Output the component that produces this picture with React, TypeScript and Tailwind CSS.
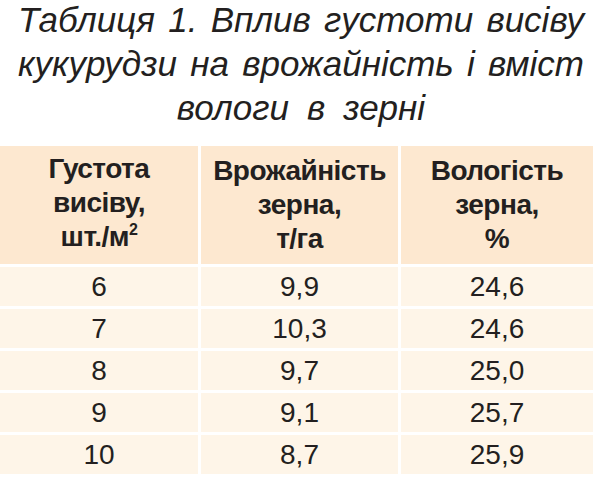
const rows = [
  ['6', '9,9', '24,6'],
  ['7', '10,3', '24,6'],
  ['8', '9,7', '25,0'],
  ['9', '9,1', '25,7'],
  ['10', '8,7', '25,9'],
]

const captionLines = [
  ['Таблиця', '1.', 'Вплив', 'густоти', 'висіву'],
  ['кукурудзи', 'на', 'врожайність', 'і', 'вміст'],
]

export default function App() {
  return (
    <div className="w-[600px] h-[479px] bg-white text-[#231f20] font-['Liberation_Sans',Arial,sans-serif] overflow-hidden">
      {/* caption */}
      <div className="h-[148px] pl-[18px] pr-[16px] -mt-[2px] italic text-[35px] leading-[44px]">
        {captionLines.map((line, i) => (
          <div key={i} className="flex justify-between whitespace-nowrap">
            {line.map((w) => (
              <span key={w}>{w}</span>
            ))}
          </div>
        ))}
        <div className="flex justify-center gap-[18px] whitespace-nowrap">
          <span>вологи</span>
          <span>в</span>
          <span>зерні</span>
        </div>
      </div>

      {/* table */}
      <div className="grid grid-cols-[198px_197px_192px] gap-[3px] w-[594px]">
        <div className="h-[118px] bg-[#fde8d0] flex items-center justify-center text-center font-bold text-[28px] leading-[34px] tracking-[-0.5px]">
          <div>
            Густота<br />висіву,<br />шт./м<span className="relative -top-[11px] text-[16px]">2</span>
          </div>
        </div>
        <div className="h-[118px] bg-[#fde8d0] flex items-center justify-center text-center font-bold text-[28px] leading-[34px] tracking-[-0.5px]">
          <div>
            Врожайність<br />зерна,<br />т/га
          </div>
        </div>
        <div className="h-[118px] bg-[#fde8d0] flex items-center justify-center text-center font-bold text-[28px] leading-[34px] tracking-[-0.5px]">
          <div>
            Вологість<br />зерна,<br />%
          </div>
        </div>

        {rows.map((r, i) => (
          <div key={i} className="contents">
            <div className="h-[39px] bg-[#fef5e8] flex items-center justify-center text-[28px]">{r[0]}</div>
            <div className="h-[39px] bg-[#fef5e8] flex items-center justify-center text-[28px]">{r[1]}</div>
            <div className="h-[39px] bg-[#fef5e8] flex items-center justify-center text-[28px]">{r[2]}</div>
          </div>
        ))}
      </div>
    </div>
  )
}
